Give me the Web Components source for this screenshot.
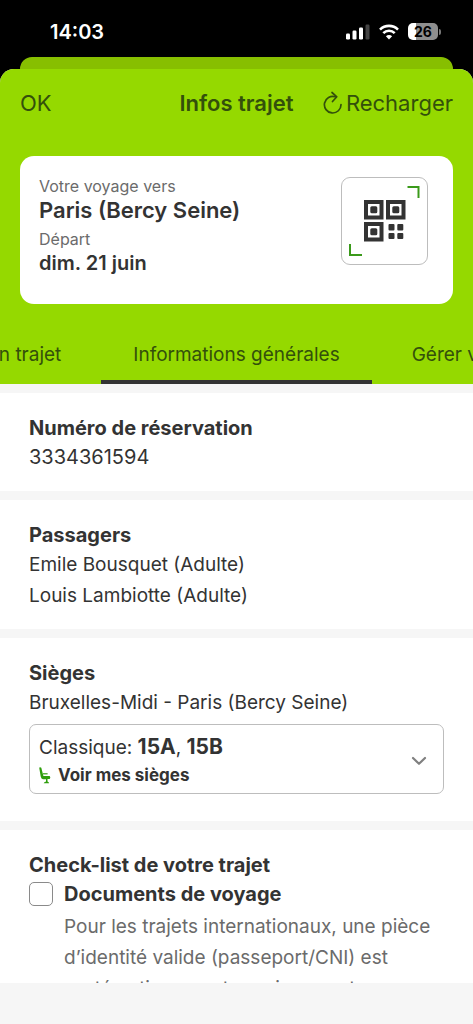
<!DOCTYPE html>
<html lang="fr">
<head>
<meta charset="utf-8">
<meta name="viewport" content="width=device-width, initial-scale=1">
<title>Infos trajet</title>
<style>
html, body { margin: 0; height: 100%; background: #000; }
body { font-family: Inter, "Liberation Sans", sans-serif; font-size: 20px; line-height: 30px; color: #333; }
</style>
</head>
<body>
<trip-app></trip-app>

<script>
const define = (name, html, extra) => {
  const template = document.createElement('template');
  template.innerHTML = html;
  customElements.define(name, class extends HTMLElement {
    constructor() {
      super();
      this.attachShadow({ mode: 'open' }).append(template.content.cloneNode(true));
      if (extra) extra(this);
    }
  });
};

define('status-bar', `
<style>
:host { display: flex; justify-content: space-between; align-items: center; height: 57px; padding: 6px 32px 0 50px; box-sizing: border-box; background: #000; color: #fff; }
time { font-size: 20px; line-height: 24px; font-weight: 600; }
.icons { display: flex; align-items: center; gap: 9px; }
svg { display: block; }
.battery { display: flex; align-items: center; gap: 1px; }
.level { width: 30px; height: 17px; border-radius: 5px; background: linear-gradient(90deg, #fff 26%, #8e8e8e 26%); color: #000; font-size: 14px; line-height: 17px; font-weight: 700; text-align: center; }
.tip { width: 2px; height: 6px; border-radius: 0 2px 2px 0; background: #777; }
</style>
<time>14:03</time>
<div class="icons">
  <svg width="24" height="16" viewBox="0 0 24 16" fill="#fff" aria-hidden="true"><rect x="0" y="9.500" width="4" height="6" rx="1.200"/><rect x="6.500" y="6.500" width="4" height="9" rx="1.200"/><rect x="13" y="3.500" width="4" height="12" rx="1.200"/><rect x="19.500" y="0.500" width="4" height="15" rx="1.200" fill="#444"/></svg>
  <svg width="20" height="16" viewBox="0 0 20 16" fill="none" stroke="#fff" stroke-width="2.600" aria-hidden="true"><path d="M1 5.600a12.800 12.800 0 0 1 18 0"/><path d="M4.300 9.100a8 8 0 0 1 11.400 0"/><path d="M10 15.500 6.900 12.300a4.400 4.400 0 0 1 6.200 0z" fill="#fff" stroke="none"/></svg>
  <div class="battery"><div class="level">26</div><div class="tip"></div></div>
</div>`);

define('nav-header', `
<style>
:host { display: grid; grid-template-columns: minmax(0, 1fr) auto minmax(0, 1fr); align-items: center; height: 68px; padding: 0 20px; color: #33500b; }
button { font: inherit; font-size: 22px; line-height: 30px; color: inherit; background: none; border: 0; padding: 0; margin: 0; white-space: nowrap; display: flex; align-items: center; gap: 3px; }
.end { justify-self: end; }
h1 { margin: 0; font-size: 22px; line-height: 30px; font-weight: 600; }
</style>
<button type="button">OK</button>
<h1>Infos trajet</h1>
<button type="button" class="end">
<svg width="20" height="24" viewBox="0 0 20 24" fill="none" stroke="currentColor" stroke-width="1.700" stroke-linecap="round" stroke-linejoin="round" aria-hidden="true"><path d="M12.300 5.800A8.300 8.300 0 1 0 18 13.500"/><path d="M9 1.500l4.800 4.300L9.500 10.500"/></svg>
Recharger</button>`);

define('trip-card', `
<style>
:host { display: flex; justify-content: space-between; margin: 19px 20px 0; padding: 20px 25px 20px 19px; height: 148px; box-sizing: border-box; border-radius: 14px; background: #fff; }
dl { margin: 0; }
dt { font-size: 16px; line-height: 20px; color: #6b6b6b; }
dd { margin: 0 0 5px; font-size: 20px; line-height: 28px; font-weight: 600; color: #333; }
.place { font-size: 22px; }
button { width: 87px; height: 88px; padding: 0; margin: 1px 0 0; border: 1px solid #bdbdbd; border-radius: 9px; background: #fff; }
svg { display: block; }
</style>
<dl><dt>Votre voyage vers</dt><dd class="place">Paris (Bercy Seine)</dd><dt>Départ</dt><dd>dim. 21 juin</dd></dl>
<button type="button" aria-label="Afficher le code QR">
<svg width="85" height="86" viewBox="0 0 85 86" aria-hidden="true">
<path d="M65.500 9h11v11M8 66v11h12" fill="none" stroke="#3b9a1b" stroke-width="2"/>
<g fill="none" stroke="#333" stroke-width="4"><rect x="24" y="24" width="15.500" height="15.500"/><rect x="46" y="24" width="15.500" height="15.500"/><rect x="24" y="46" width="15.500" height="15.500"/></g>
<g fill="#333"><rect x="28.300" y="28.300" width="7" height="7" rx="1.500"/><rect x="50.300" y="28.300" width="7" height="7" rx="1.500"/><rect x="28.300" y="50.300" width="7" height="7" rx="1.500"/><rect x="46.500" y="46" width="6" height="6.500" rx="1"/><rect x="55.300" y="46" width="6" height="6.500" rx="1"/><rect x="46.500" y="55" width="6" height="6" rx="1"/><rect x="55.300" y="55" width="6" height="6" rx="1"/></g>
</svg></button>`);

define('tab-bar', `
<style>
:host { display: block; margin-top: 30px; overflow: hidden; color: #33500b; }
nav { display: grid; grid-template-columns: minmax(0, 1fr) auto minmax(0, 1fr); gap: 8px; }
nav > div { display: flex; min-width: 0; }
.before { justify-content: flex-end; }
a { flex: none; padding: 6px 32px 10px; border-bottom: 4px solid transparent; color: inherit; text-decoration: none; white-space: nowrap; font-size: 19px; line-height: 30px; }
a[aria-current] { border-bottom-color: #333; border-radius: 2px 2px 0 0; }
</style>
<nav aria-label="Rubriques">
<div class="before"><a href="#trajet">Mon trajet</a></div>
<div><a href="#infos" aria-current="page">Informations générales</a></div>
<div><a href="#gerer">Gérer votre trajet</a></div>
</nav>`);

define('info-section', `
<style>
:host { display: block; margin-top: 9px; padding: 21px 29px 18px; background: #fff; }
h2 { margin: 0; font-size: 20px; line-height: 28px; font-weight: 700; }
</style>
<h2></h2><slot></slot>`, host => { host.shadowRoot.querySelector('h2').textContent = host.getAttribute('heading'); });

define('info-line', `
<style>
:host { display: block; font-size: 19px; line-height: 31px; }
:host([numeric]) { font-size: 20px; }
</style><slot></slot>`);

define('seat-picker', `
<style>
:host { display: block; margin: 6px 0 9px; }
button { width: 100%; display: flex; align-items: center; justify-content: space-between; padding: 9px 16px 5px 9px; border: 1px solid #bdbdbd; border-radius: 7px; background: #fff; color: inherit; font: inherit; text-align: left; }
.text, .line { display: block; }
.line { font-size: 19px; line-height: 28px; }
.link { display: flex; align-items: center; gap: 7px; font-size: 17px; line-height: 26px; font-weight: 700; }
b { font-size: 21px; line-height: 20px; font-weight: 700; }
svg { display: block; flex: none; }
</style>
<button type="button">
<span class="text"><span class="line">Classique: <b>15A</b>, <b>15B</b></span>
<span class="link"><svg width="12" height="17" viewBox="0 0 12 17" aria-hidden="true"><path d="M0.300 1.200Q0.200 0 1.200 0.200L2.300 0.800 4.400 9H10.700Q12 10.500 10.700 12H8.500V14.500Q10.200 15 10 16.300H4.700Q5 15 7 14.500V12.300H4Q2.200 12 1.700 9.500Z" fill="#2f9e0c"/><path d="M4 6.800H8.600" stroke="#2f9e0c" stroke-width="1.200"/></svg>Voir mes sièges</span></span>
<svg width="16" height="10" viewBox="0 0 16 10" fill="none" stroke="#808080" stroke-width="2.200" stroke-linecap="round" stroke-linejoin="round" aria-hidden="true"><path d="M2 2l6 5.800L14 2"/></svg>
</button>`);

define('check-item', `
<style>
:host { display: grid; grid-template-columns: 24px minmax(0, 1fr); column-gap: 11px; }
input { appearance: none; width: 24px; height: 24px; margin: 3px 0 0; border: 1px solid #8a8a8a; border-radius: 5px; background: #fff; box-sizing: border-box; }
input:checked { background: #3b9a1b; }
label { font-size: 20px; line-height: 30px; font-weight: 700; }
p { grid-column: 2; margin: 2px 0 0; font-size: 19px; line-height: 31px; color: #6b6b6b; }
</style>
<input type="checkbox" id="item"><label for="item"><slot name="title"></slot></label>
<p><slot></slot></p>`);

define('trip-app', `
<style>
:host { display: flex; flex-direction: column; height: 100vh; overflow: hidden; background: #000; }
.behind { flex: none; height: 12px; margin: 0 20px; background: #87bf00; border-radius: 12px 12px 0 0; }
.sheet { flex: 1; min-height: 0; display: flex; flex-direction: column; background: #f6f6f6; border-radius: 14px 14px 0 0; overflow: hidden; }
header { flex: none; background: #95d900; }
main { flex: 1; min-height: 0; overflow: hidden; }
footer { flex: none; height: 41px; background: #f6f6f6; }
status-bar { flex: none; }
</style>
<status-bar></status-bar>
<div class="behind"></div>
<div class="sheet">
<header><nav-header></nav-header><trip-card></trip-card><tab-bar></tab-bar></header>
<main>
<info-section heading="Numéro de réservation"><info-line numeric>3334361594</info-line></info-section>
<info-section heading="Passagers"><info-line>Emile Bousquet (Adulte)</info-line><info-line>Louis Lambiotte (Adulte)</info-line></info-section>
<info-section heading="Sièges"><info-line>Bruxelles-Midi - Paris (Bercy Seine)</info-line><seat-picker></seat-picker></info-section>
<info-section heading="Check-list de votre trajet"><check-item><span slot="title">Documents de voyage</span>Pour les trajets internationaux, une pièce d’identité valide (passeport/CNI) est systématiquement requise avant</check-item></info-section>
</main>
<footer></footer>
</div>`);
</script>
</body>
</html>
